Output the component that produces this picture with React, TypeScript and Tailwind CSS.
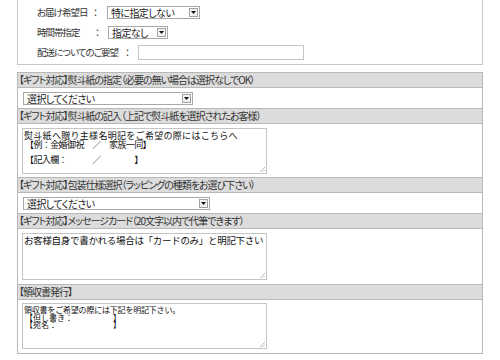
import React from "react";

const font = "font-['Noto_Sans_CJK_JP','Noto_Sans',sans-serif]";

function Sel({ w, text }: { w: string; text: string }) {
  return (
    <div className={`${w} h-[13px] flex-none border border-[#a9a9a9] bg-white flex items-center justify-between pl-[3px] pr-[1px]`}>
      <span className="text-[10px] leading-none text-[#222] [font-feature-settings:'palt'] tracking-[-0.6px] whitespace-nowrap">{text}</span>
      <span className="w-[9px] h-[9px] border border-[#a0a0a0] bg-[#f4f4f4] flex items-center justify-center">
        <svg width="5" height="3" viewBox="0 0 5 3"><path d="M0 0h5L2.5 3z" fill="#111" /></svg>
      </span>
    </div>
  );
}

function Header({ text }: { text: string }) {
  return (
    <div className="h-[16px] border-y border-[#b8b8b8] bg-[#dcdcdc] flex items-center pl-[1px]">
      <span className="text-[10px] leading-none text-[#333] [font-feature-settings:'palt'] tracking-[-1px] whitespace-nowrap">{text}</span>
    </div>
  );
}

function Area({ h, children }: { h: string; children?: React.ReactNode }) {
  return (
    <div className={`relative w-[245px] ${h} border border-[#c4c4c4] bg-white text-[#111] whitespace-pre`}>
      {children}
      <svg className="absolute right-[1px] bottom-[1px]" width="6" height="6" viewBox="0 0 6 6">
        <path d="M6 1L1 6M6 3.5L3.5 6" stroke="#aaa" strokeWidth="0.8" />
      </svg>
    </div>
  );
}

export default function App() {
  return (
    <div className={`w-[500px] h-[360px] bg-white overflow-hidden ${font}`}>
      <div className="ml-[17px] w-[466px]">
        <div className="h-[65px] border-x border-b border-[#c8c8c8] pl-[19px] text-[9.5px] leading-none text-[#333] [font-feature-settings:'palt'] tracking-[-1px]">
          <div className="pt-[6px] flex items-center">
            <span className="w-[53px] flex-none whitespace-nowrap">お届け希望日</span>
            <span className="w-[10px] flex-none text-center">：</span>
            <span className="w-[7px] flex-none" />
            <Sel w="w-[93px]" text="特に指定しない" />
          </div>
          <div className="pt-[7px] flex items-center">
            <span className="w-[55px] flex-none whitespace-nowrap">時間帯指定</span>
            <span className="w-[10px] flex-none text-center">：</span>
            <span className="w-[6px] flex-none" />
            <Sel w="w-[60px]" text="指定なし" />
          </div>
          <div className="pt-[6px] flex items-center">
            <span className="w-[85px] flex-none whitespace-nowrap">配送についてのご要望</span>
            <span className="w-[10px] flex-none text-center">：</span>
            <span className="w-[6px] flex-none" />
            <div className="w-[166px] h-[15px] flex-none border border-[#c4c4c4] bg-white" />
          </div>
        </div>

        <div className="mt-[7px] border-x border-b border-[#b8b8b8]">
          <Header text="【ギフト対応】熨斗紙の指定（必要の無い場合は選択なしでOK）" />
          <div className="h-[20px] pl-[5px] pt-[4px]">
            <Sel w="w-[170px]" text="選択してください" />
          </div>
          <Header text="【ギフト対応】熨斗紙の記入（上記で熨斗紙を選択されたお客様）" />
          <div className="h-[53px] pl-[4px] pt-[4px]">
            <Area h="h-[46px]">
              <div className="text-[9px] leading-[9px] pt-[2px] pl-[1px] tracking-[0.3px]">熨斗紙へ贈り主様名明記をご希望の際にはこちらへ</div>
              <div className="text-[9px] leading-[9px] pl-[2px] tracking-[-0.6px]">【例：金婚御祝　／　家族一同】</div>
              <div className="text-[9px] leading-[9px] pl-[2px] mt-[6px] tracking-[-0.6px]">【記入欄：　　　／　　　　】</div>
            </Area>
          </div>
          <Header text="【ギフト対応】包装仕様選択（ラッピングの種類をお選び下さい）" />
          <div className="h-[20px] pl-[5px] pt-[4px]">
            <Sel w="w-[187px]" text="選択してください" />
          </div>
          <Header text="【ギフト対応】メッセージカード（20文字以内で代筆できます）" />
          <div className="h-[55px] pl-[4px] pt-[4px]">
            <Area h="h-[47px]">
              <div className="text-[9.5px] leading-[10px] pt-[1px] pl-[1px] tracking-[-0.3px]">お客様自身で書かれる場合は「カードのみ」と明記下さい</div>
            </Area>
          </div>
          <Header text="【領収書発行】" />
          <div className="h-[53px] pl-[4px] pt-[3px]">
            <Area h="h-[46px]">
              <div className="text-[8px] leading-[7.5px] pt-[2px] pl-[1px] tracking-[-0.2px]">領収書をご希望の際には下記を明記下さい。</div>
              <div className="text-[8px] leading-[7.5px] pl-[2px]">【但し書き：　　　　　】</div>
              <div className="text-[8px] leading-[7.5px] pl-[2px]">【宛名：　　　　　　　】</div>
            </Area>
          </div>
        </div>
      </div>
    </div>
  );
}
